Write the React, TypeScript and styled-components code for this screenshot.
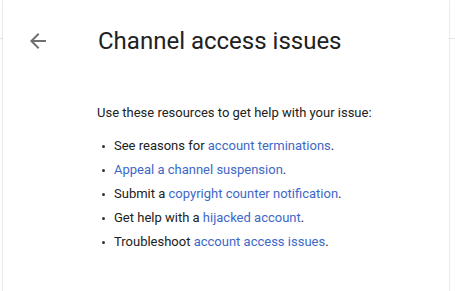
import styled, { createGlobalStyle } from "styled-components";

const GlobalStyle = createGlobalStyle`
  html, body {
    margin: 0;
    padding: 0;
    background: #ffffff;
  }
  body {
    font-family: Roboto, "Liberation Sans", Arial, sans-serif;
    color: #202124;
  }
`;

const Page = styled.div`
  width: 455px;
  height: 291px;
  overflow: hidden;
`;

const Backdrop = styled.div`
  height: 38px;
  border-bottom: 1px solid #e6e6e6;
`;

const Card = styled.div`
  margin: -39px 0 0 3px;
  width: 446px;
  height: 300px;
  background: #ffffff;
  box-shadow: 0 0 1px rgba(0, 0, 0, 0.22), 0 1px 2px rgba(0, 0, 0, 0.12);
  position: relative;
`;

const Header = styled.div`
  display: flex;
  align-items: center;
  height: 82px;
`;

const BackButton = styled.button`
  width: 24px;
  height: 24px;
  margin-left: 23px;
  padding: 0;
  border: 0;
  background: none;
  display: flex;
  align-items: center;
  justify-content: center;
  color: #707070;
`;

const Title = styled.h1`
  margin: 0 0 0 48px;
  font-size: 24px;
  font-weight: 400;
  color: #212121;
`;

const Body = styled.div`
  padding: 23px 0 0 94px;
  font-size: 13px;
  line-height: 16px;
  color: #212121;
`;

const Intro = styled.p`
  margin: 0;
`;

const List = styled.ul`
  margin: 17px 0 0;
  padding: 0 0 0 17px;
  list-style: none;
`;

const Item = styled.li`
  position: relative;
  height: 24px;
  line-height: 16px;

  &::before {
    content: "";
    position: absolute;
    left: -12px;
    top: 7px;
    width: 3px;
    height: 3px;
    border-radius: 50%;
    background: #333333;
  }
`;

const Link = styled.a`
  color: #3d68c8;
  text-decoration: none;
`;

const items: { before: string; link: string }[] = [
  { before: "See reasons for ", link: "account terminations" },
  { before: "", link: "Appeal a channel suspension" },
  { before: "Submit a ", link: "copyright counter notification" },
  { before: "Get help with a ", link: "hijacked account" },
  { before: "Troubleshoot ", link: "account access issues" },
];

export default function App() {
  return (
    <>
      <GlobalStyle />
      <Page>
        <Backdrop />
        <Card>
          <Header>
            <BackButton aria-label="Back">
              <svg width="24" height="24" viewBox="0 0 24 24" fill="currentColor">
                <path d="M20 11H7.83l5.59-5.59L12 4l-8 8 8 8 1.41-1.41L7.83 13H20v-2z" />
              </svg>
            </BackButton>
            <Title>Channel access issues</Title>
          </Header>
          <Body>
            <Intro>Use these resources to get help with your issue:</Intro>
            <List>
              {items.map((it) => (
                <Item key={it.link}>
                  {it.before}
                  <Link href="#">{it.link}</Link>.
                </Item>
              ))}
            </List>
          </Body>
        </Card>
      </Page>
    </>
  );
}
